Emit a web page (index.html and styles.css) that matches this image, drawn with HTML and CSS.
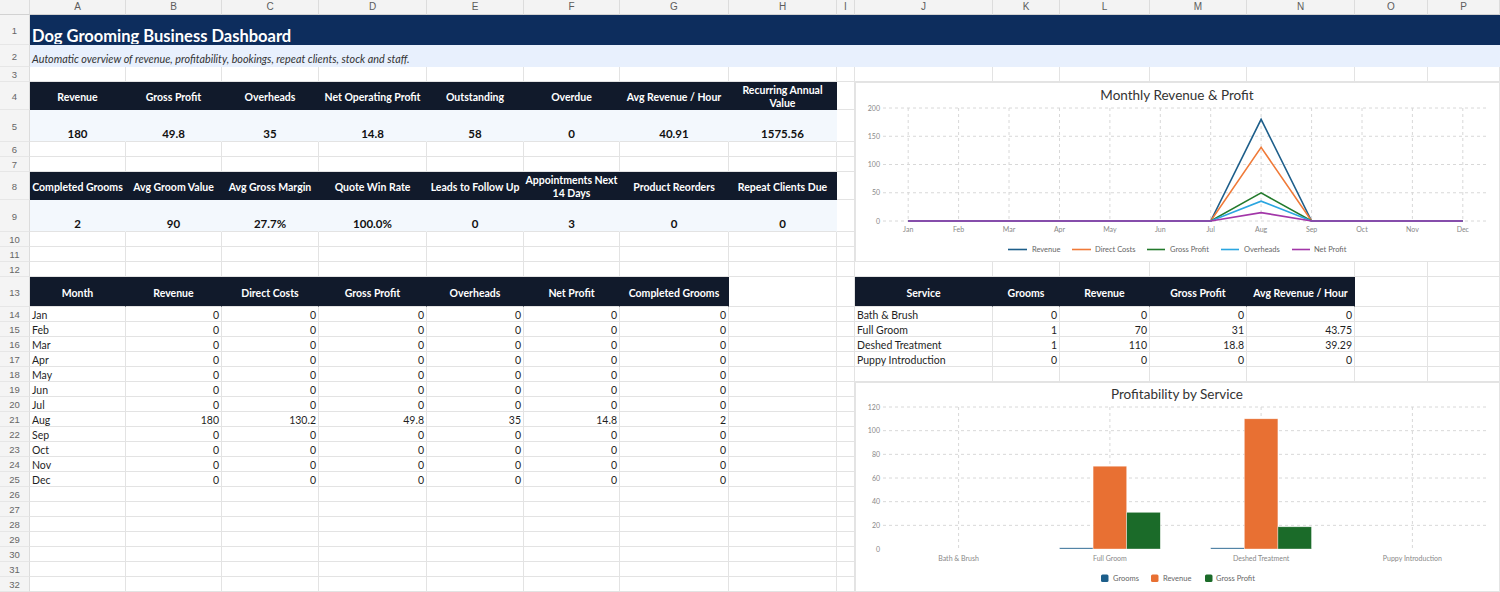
FILE: index.html
```html
<!DOCTYPE html>
<html lang="en">
<head>
<meta charset="utf-8">
<title>Dog Grooming Business Dashboard</title>
<link rel="stylesheet" href="styles.css">
</head>
<body>
<div class="sheet">
  <div class="ch"></div><div class="ch">A</div><div class="ch">B</div><div class="ch">C</div><div class="ch">D</div><div class="ch">E</div><div class="ch">F</div><div class="ch">G</div><div class="ch">H</div><div class="ch">I</div><div class="ch">J</div><div class="ch">K</div><div class="ch">L</div><div class="ch">M</div><div class="ch">N</div><div class="ch">O</div><div class="ch">P</div>

  <div class="rh">1</div><div class="c title">Dog Grooming Business Dashboard</div>
  <div class="rh">2</div><div class="c subtitle">Automatic overview of revenue, profitability, bookings, repeat clients, stock and staff.</div>

  <div class="rh">3</div><div class="c"></div><div class="c"></div><div class="c"></div><div class="c"></div><div class="c"></div><div class="c"></div><div class="c"></div><div class="c"></div><div class="c"></div><div class="c"></div><div class="c"></div><div class="c"></div><div class="c"></div><div class="c"></div><div class="c"></div><div class="c"></div>

  <div class="rh">4</div><div class="c kh">Revenue</div><div class="c kh">Gross Profit</div><div class="c kh">Overheads</div><div class="c kh">Net Operating Profit</div><div class="c kh">Outstanding</div><div class="c kh">Overdue</div><div class="c kh">Avg Revenue / Hour</div><div class="c kh">Recurring Annual Value</div><div class="c"></div>
  <div class="rh">5</div><div class="c kv">180</div><div class="c kv">49.8</div><div class="c kv">35</div><div class="c kv">14.8</div><div class="c kv">58</div><div class="c kv">0</div><div class="c kv">40.91</div><div class="c kv">1575.56</div><div class="c"></div>
  <div class="rh">6</div><div class="c"></div><div class="c"></div><div class="c"></div><div class="c"></div><div class="c"></div><div class="c"></div><div class="c"></div><div class="c"></div><div class="c"></div>
  <div class="rh">7</div><div class="c"></div><div class="c"></div><div class="c"></div><div class="c"></div><div class="c"></div><div class="c"></div><div class="c"></div><div class="c"></div><div class="c"></div>
  <div class="rh">8</div><div class="c kh">Completed Grooms</div><div class="c kh">Avg Groom Value</div><div class="c kh">Avg Gross Margin</div><div class="c kh">Quote Win Rate</div><div class="c kh">Leads to Follow Up</div><div class="c kh">Appointments Next 14 Days</div><div class="c kh">Product Reorders</div><div class="c kh">Repeat Clients Due</div><div class="c"></div>
  <div class="rh">9</div><div class="c kv">2</div><div class="c kv">90</div><div class="c kv">27.7%</div><div class="c kv">100.0%</div><div class="c kv">0</div><div class="c kv">3</div><div class="c kv">0</div><div class="c kv">0</div><div class="c"></div>
  <div class="rh">10</div><div class="c"></div><div class="c"></div><div class="c"></div><div class="c"></div><div class="c"></div><div class="c"></div><div class="c"></div><div class="c"></div><div class="c"></div>
  <div class="rh">11</div><div class="c"></div><div class="c"></div><div class="c"></div><div class="c"></div><div class="c"></div><div class="c"></div><div class="c"></div><div class="c"></div><div class="c"></div>
  <div class="rh">12</div><div class="c"></div><div class="c"></div><div class="c"></div><div class="c"></div><div class="c"></div><div class="c"></div><div class="c"></div><div class="c"></div><div class="c"></div><div class="c"></div><div class="c"></div><div class="c"></div><div class="c"></div><div class="c"></div><div class="c"></div><div class="c"></div>

  <div class="rh">13</div><div class="c th">Month</div><div class="c th">Revenue</div><div class="c th">Direct Costs</div><div class="c th">Gross Profit</div><div class="c th">Overheads</div><div class="c th">Net Profit</div><div class="c th">Completed Grooms</div><div class="c"></div><div class="c"></div><div class="c th">Service</div><div class="c th">Grooms</div><div class="c th">Revenue</div><div class="c th">Gross Profit</div><div class="c th">Avg Revenue / Hour</div><div class="c"></div><div class="c"></div>

  <div class="rh">14</div><div class="c">Jan</div><div class="c n">0</div><div class="c n">0</div><div class="c n">0</div><div class="c n">0</div><div class="c n">0</div><div class="c n">0</div><div class="c"></div><div class="c"></div><div class="c">Bath &amp; Brush</div><div class="c n">0</div><div class="c n">0</div><div class="c n">0</div><div class="c n">0</div><div class="c"></div><div class="c"></div>
  <div class="rh">15</div><div class="c">Feb</div><div class="c n">0</div><div class="c n">0</div><div class="c n">0</div><div class="c n">0</div><div class="c n">0</div><div class="c n">0</div><div class="c"></div><div class="c"></div><div class="c">Full Groom</div><div class="c n">1</div><div class="c n">70</div><div class="c n">31</div><div class="c n">43.75</div><div class="c"></div><div class="c"></div>
  <div class="rh">16</div><div class="c">Mar</div><div class="c n">0</div><div class="c n">0</div><div class="c n">0</div><div class="c n">0</div><div class="c n">0</div><div class="c n">0</div><div class="c"></div><div class="c"></div><div class="c">Deshed Treatment</div><div class="c n">1</div><div class="c n">110</div><div class="c n">18.8</div><div class="c n">39.29</div><div class="c"></div><div class="c"></div>
  <div class="rh">17</div><div class="c">Apr</div><div class="c n">0</div><div class="c n">0</div><div class="c n">0</div><div class="c n">0</div><div class="c n">0</div><div class="c n">0</div><div class="c"></div><div class="c"></div><div class="c">Puppy Introduction</div><div class="c n">0</div><div class="c n">0</div><div class="c n">0</div><div class="c n">0</div><div class="c"></div><div class="c"></div>
  <div class="rh">18</div><div class="c">May</div><div class="c n">0</div><div class="c n">0</div><div class="c n">0</div><div class="c n">0</div><div class="c n">0</div><div class="c n">0</div><div class="c"></div><div class="c"></div><div class="c"></div><div class="c"></div><div class="c"></div><div class="c"></div><div class="c"></div><div class="c"></div><div class="c"></div>
  <div class="rh">19</div><div class="c">Jun</div><div class="c n">0</div><div class="c n">0</div><div class="c n">0</div><div class="c n">0</div><div class="c n">0</div><div class="c n">0</div><div class="c"></div><div class="c"></div>
  <div class="rh">20</div><div class="c">Jul</div><div class="c n">0</div><div class="c n">0</div><div class="c n">0</div><div class="c n">0</div><div class="c n">0</div><div class="c n">0</div><div class="c"></div><div class="c"></div>
  <div class="rh">21</div><div class="c">Aug</div><div class="c n">180</div><div class="c n">130.2</div><div class="c n">49.8</div><div class="c n">35</div><div class="c n">14.8</div><div class="c n">2</div><div class="c"></div><div class="c"></div>
  <div class="rh">22</div><div class="c">Sep</div><div class="c n">0</div><div class="c n">0</div><div class="c n">0</div><div class="c n">0</div><div class="c n">0</div><div class="c n">0</div><div class="c"></div><div class="c"></div>
  <div class="rh">23</div><div class="c">Oct</div><div class="c n">0</div><div class="c n">0</div><div class="c n">0</div><div class="c n">0</div><div class="c n">0</div><div class="c n">0</div><div class="c"></div><div class="c"></div>
  <div class="rh">24</div><div class="c">Nov</div><div class="c n">0</div><div class="c n">0</div><div class="c n">0</div><div class="c n">0</div><div class="c n">0</div><div class="c n">0</div><div class="c"></div><div class="c"></div>
  <div class="rh">25</div><div class="c">Dec</div><div class="c n">0</div><div class="c n">0</div><div class="c n">0</div><div class="c n">0</div><div class="c n">0</div><div class="c n">0</div><div class="c"></div><div class="c"></div>
  <div class="rh">26</div><div class="c"></div><div class="c"></div><div class="c"></div><div class="c"></div><div class="c"></div><div class="c"></div><div class="c"></div><div class="c"></div><div class="c"></div>
  <div class="rh">27</div><div class="c"></div><div class="c"></div><div class="c"></div><div class="c"></div><div class="c"></div><div class="c"></div><div class="c"></div><div class="c"></div><div class="c"></div>
  <div class="rh">28</div><div class="c"></div><div class="c"></div><div class="c"></div><div class="c"></div><div class="c"></div><div class="c"></div><div class="c"></div><div class="c"></div><div class="c"></div>
  <div class="rh">29</div><div class="c"></div><div class="c"></div><div class="c"></div><div class="c"></div><div class="c"></div><div class="c"></div><div class="c"></div><div class="c"></div><div class="c"></div>
  <div class="rh">30</div><div class="c"></div><div class="c"></div><div class="c"></div><div class="c"></div><div class="c"></div><div class="c"></div><div class="c"></div><div class="c"></div><div class="c"></div>
  <div class="rh">31</div><div class="c"></div><div class="c"></div><div class="c"></div><div class="c"></div><div class="c"></div><div class="c"></div><div class="c"></div><div class="c"></div><div class="c"></div>
  <div class="rh">32</div><div class="c"></div><div class="c"></div><div class="c"></div><div class="c"></div><div class="c"></div><div class="c"></div><div class="c"></div><div class="c"></div><div class="c"></div>

  <div class="chart chart1">
    <svg viewBox="1 1 643 178" width="643" height="178">
      <text class="ctitle" x="322" y="18" text-anchor="middle">Monthly Revenue &amp; Profit</text>
      <g class="grid">
        <line x1="28" y1="26" x2="633" y2="26"/>
        <line x1="28" y1="54.25" x2="633" y2="54.25"/>
        <line x1="28" y1="82.5" x2="633" y2="82.5"/>
        <line x1="28" y1="110.75" x2="633" y2="110.75"/>
        <line x1="28" y1="139" x2="633" y2="139"/>
        <line x1="53.2" y1="26" x2="53.2" y2="139"/>
        <line x1="103.6" y1="26" x2="103.6" y2="139"/>
        <line x1="154" y1="26" x2="154" y2="139"/>
        <line x1="204.5" y1="26" x2="204.5" y2="139"/>
        <line x1="254.9" y1="26" x2="254.9" y2="139"/>
        <line x1="305.3" y1="26" x2="305.3" y2="139"/>
        <line x1="355.7" y1="26" x2="355.7" y2="139"/>
        <line x1="406.1" y1="26" x2="406.1" y2="139"/>
        <line x1="456.6" y1="26" x2="456.6" y2="139"/>
        <line x1="507" y1="26" x2="507" y2="139"/>
        <line x1="557.4" y1="26" x2="557.4" y2="139"/>
        <line x1="607.8" y1="26" x2="607.8" y2="139"/>
      </g>
      <g class="ax" text-anchor="end">
        <text x="25" y="28.5">200</text>
        <text x="25" y="56.75">150</text>
        <text x="25" y="85">100</text>
        <text x="25" y="113.25">50</text>
        <text x="25" y="141.5">0</text>
      </g>
      <g class="ax" text-anchor="middle">
        <text x="53.2" y="150">Jan</text>
        <text x="103.6" y="150">Feb</text>
        <text x="154" y="150">Mar</text>
        <text x="204.5" y="150">Apr</text>
        <text x="254.9" y="150">May</text>
        <text x="305.3" y="150">Jun</text>
        <text x="355.7" y="150">Jul</text>
        <text x="406.1" y="150">Aug</text>
        <text x="456.6" y="150">Sep</text>
        <text x="507" y="150">Oct</text>
        <text x="557.4" y="150">Nov</text>
        <text x="607.8" y="150">Dec</text>
      </g>
      <polyline class="ln s-rev" points="53.2,139 355.7,139 406.1,37.3 456.6,139 607.8,139"/>
      <polyline class="ln s-dc" points="53.2,139 355.7,139 406.1,65.4 456.6,139 607.8,139"/>
      <polyline class="ln s-gp" points="53.2,139 355.7,139 406.1,110.9 456.6,139 607.8,139"/>
      <polyline class="ln s-oh" points="53.2,139 355.7,139 406.1,119.2 456.6,139 607.8,139"/>
      <polyline class="ln s-np" points="53.2,139 355.7,139 406.1,130.6 456.6,139 607.8,139"/>
      <g class="lg">
        <line class="ln s-rev" x1="153" y1="167.5" x2="172" y2="167.5"/><text x="177" y="170">Revenue</text>
        <line class="ln s-dc" x1="217" y1="167.5" x2="236" y2="167.5"/><text x="240" y="170">Direct Costs</text>
        <line class="ln s-gp" x1="292" y1="167.5" x2="310" y2="167.5"/><text x="315" y="170">Gross Profit</text>
        <line class="ln s-oh" x1="366" y1="167.5" x2="384" y2="167.5"/><text x="389" y="170">Overheads</text>
        <line class="ln s-np" x1="437" y1="167.5" x2="455" y2="167.5"/><text x="459" y="170">Net Profit</text>
      </g>
    </svg>
  </div>

  <div class="chart chart2">
    <svg viewBox="1 2 643 208" width="643" height="208">
      <text class="ctitle" x="322" y="18" text-anchor="middle">Profitability by Service</text>
      <g class="grid">
        <line x1="28" y1="26" x2="633" y2="26"/>
        <line x1="28" y1="49.67" x2="633" y2="49.67"/>
        <line x1="28" y1="73.33" x2="633" y2="73.33"/>
        <line x1="28" y1="97" x2="633" y2="97"/>
        <line x1="28" y1="120.67" x2="633" y2="120.67"/>
        <line x1="28" y1="144.33" x2="633" y2="144.33"/>
        <line x1="103.6" y1="26" x2="103.6" y2="168"/>
        <line x1="254.9" y1="26" x2="254.9" y2="168"/>
        <line x1="406.1" y1="26" x2="406.1" y2="168"/>
        <line x1="557.4" y1="26" x2="557.4" y2="168"/>
      </g>
      <g class="ax" text-anchor="end">
        <text x="25" y="28.5">120</text>
        <text x="25" y="52.2">100</text>
        <text x="25" y="75.8">80</text>
        <text x="25" y="99.5">60</text>
        <text x="25" y="123.2">40</text>
        <text x="25" y="146.8">20</text>
        <text x="25" y="170.5">0</text>
      </g>
      <g class="bars">
        <rect class="b-gr" x="204.5" y="166.8" width="33.6" height="1.2"/>
        <rect class="b-rv" x="238.1" y="85.2" width="33.6" height="82.8"/>
        <rect class="b-gp" x="271.7" y="131.3" width="33.6" height="36.7"/>
        <rect class="b-gr" x="355.7" y="166.8" width="33.6" height="1.2"/>
        <rect class="b-rv" x="389.3" y="37.8" width="33.6" height="130.2"/>
        <rect class="b-gp" x="422.9" y="145.8" width="33.6" height="22.2"/>
      </g>
      <g class="ax" text-anchor="middle">
        <text x="103.6" y="179.5">Bath &amp; Brush</text>
        <text x="254.9" y="179.5">Full Groom</text>
        <text x="406.1" y="179.5">Deshed Treatment</text>
        <text x="557.4" y="179.5">Puppy Introduction</text>
      </g>
      <g class="lg">
        <rect class="b-gr" x="246" y="193.5" width="7.5" height="7.5" rx="1.5"/><text x="258" y="200">Grooms</text>
        <rect class="b-rv" x="296" y="193.5" width="7.5" height="7.5" rx="1.5"/><text x="308" y="200">Revenue</text>
        <rect class="b-gp" x="350" y="193.5" width="7.5" height="7.5" rx="1.5"/><text x="361" y="200">Gross Profit</text>
      </g>
    </svg>
  </div>
</div>
</body>
</html>
```

FILE: styles.css
```css
* { box-sizing: border-box; margin: 0; padding: 0; }
html, body { background: #ffffff; }
body {
  width: 1500px;
  height: 592px;
  overflow: hidden;
  font-family: Lato, "Noto Sans", sans-serif;
  color: #1f1f1f;
}

.sheet {
  display: grid;
  grid-template-columns: 30px 96px 96px 97px 108px 97px 96px 109px 108px 18px 138px 67px 90px 97px 108px 73px 72px;
  grid-template-rows: 15px 30px 22px 15px 28px 32px 15px 15px 28px 32px 15px 15px 15px 30px repeat(19, 15px);
}

.ch {
  background: #f3f3f3;
  border-right: 1px solid #dcdcdc;
  border-bottom: 1px solid #d2d2d2;
  color: #5c5c5c;
  font: 10px/14px "Liberation Sans", Arial, sans-serif;
  text-align: center;
}

.rh {
  background: #f4f4f4;
  border-right: 1px solid #dcdcdc;
  border-bottom: 1px solid #e6e6e6;
  color: #666666;
  font: 9.5px "Liberation Sans", Arial, sans-serif;
  display: flex;
  align-items: center;
  justify-content: center;
  padding-top: 1px;
}

.c {
  border-right: 1px solid #e3e3e3;
  border-bottom: 1px solid #e3e3e3;
  font-size: 10.5px;
  line-height: 1.2;
  padding: 2px 2px 0;
  display: flex;
  align-items: center;
  white-space: nowrap;
  overflow: hidden;
  min-width: 0;
}

.n { justify-content: flex-end; }

.title {
  grid-column: span 16;
  background: #0d2d5d;
  border-color: #0d2d5d;
  color: #ffffff;
  font-weight: 700;
  font-size: 16.5px;
  line-height: 1;
  align-items: flex-end;
}

.subtitle {
  grid-column: span 16;
  background: #e8f0fd;
  border-color: #e8f0fd;
  color: #333333;
  font-style: italic;
  font-size: 10.8px;
  line-height: 1.1;
  align-items: flex-end;
  padding-bottom: 1px;
}

.kh, .th {
  background: #111a2b;
  border-color: #111a2b;
  color: #ffffff;
  font-weight: 700;
  justify-content: center;
  text-align: center;
  white-space: normal;
  padding: 3px 1px 0;
}

.th { border-bottom-color: #e3e3e3; }

.kv {
  background: #f3f8fd;
  border-right-color: transparent;
  color: #111111;
  font-weight: 700;
  font-size: 11.5px;
  line-height: 1.1;
  justify-content: center;
  align-items: flex-end;
}

.chart {
  background: #ffffff;
  border: 1px solid #e4e4e4;
  overflow: hidden;
}
.chart svg { display: block; }
.chart1 { grid-column: 11 / 18; grid-row: 5 / 13; }
.chart2 { grid-column: 11 / 18; grid-row: 20 / 34; }

.ctitle { font: 13.5px Lato, sans-serif; fill: #333333; }
.grid line { stroke: #d8d8d8; stroke-width: 1; stroke-dasharray: 3 3; }
.ax { font: 7px Lato, sans-serif; fill: #888888; }
.lg { font: 7.5px Lato, sans-serif; fill: #666666; }

.ln { fill: none; stroke-width: 1.6; }
.s-rev { stroke: #1d5e8a; }
.s-dc { stroke: #f07a38; }
.s-gp { stroke: #237a2c; }
.s-oh { stroke: #2ba6e0; }
.s-np { stroke: #a236a8; }

.b-gr { fill: #1d5e8a; }
.b-rv { fill: #e87033; }
.b-gp { fill: #1b6b29; }
.bars rect { stroke: #ffffff; stroke-opacity: 0.6; stroke-width: 0.6; }
```
